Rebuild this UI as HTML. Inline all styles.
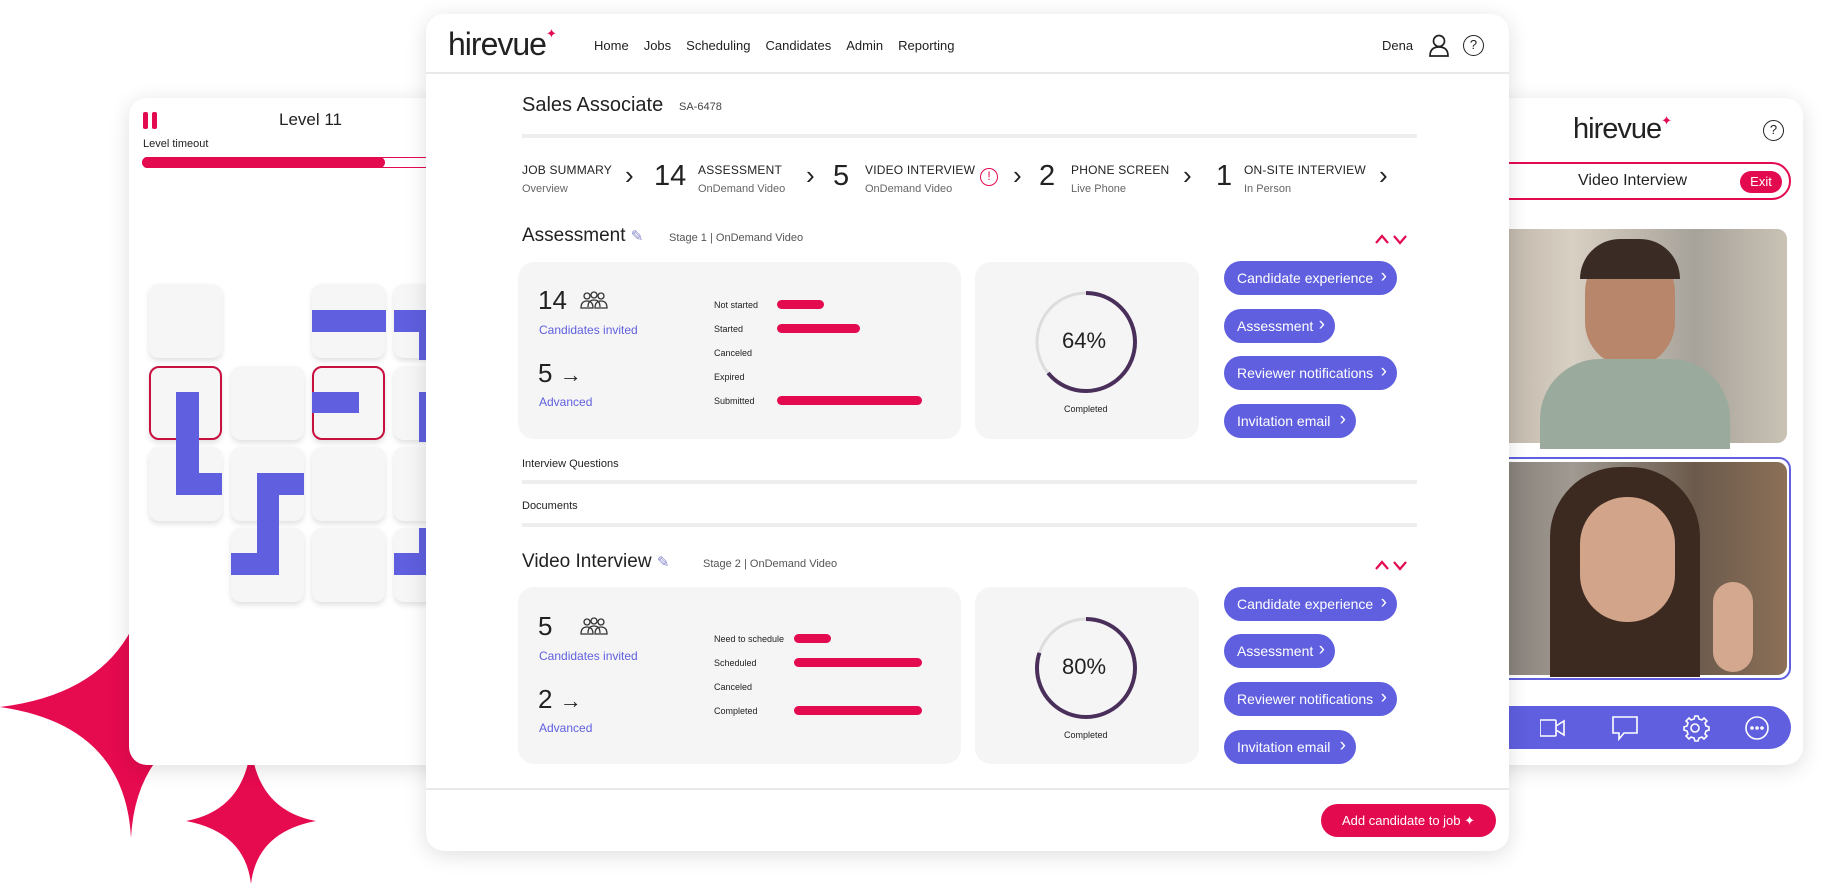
<!DOCTYPE html>
<html><head><meta charset="utf-8"><style>
*{box-sizing:border-box;margin:0;padding:0}
body{width:1824px;height:886px;background:#fff;font-family:"Liberation Sans",sans-serif;color:#222;position:relative;overflow:hidden}
.abs{position:absolute}
.panel{position:absolute;background:#fff;border-radius:18px;box-shadow:0 4px 22px rgba(0,0,0,.13)}
.tile{position:absolute;width:73px;height:74px;background:#f6f6f7;border-radius:10px;box-shadow:0 3px 6px rgba(0,0,0,.12)}
.sel{border:2px solid #c8103f}
.pb{position:absolute;background:#5f5fdf}
.nav span{margin-right:15px}
.btn{position:absolute;left:1224px;height:34px;background:#5f5fdf;color:#fff;border-radius:17px;font-size:14px;line-height:34px;padding-left:13px}
.btn:after{content:"›";position:absolute;right:10px;font-size:19px;top:-1px}
.card{position:absolute;background:#f5f5f6;border-radius:16px}
.lbl{position:absolute;font-size:9px;color:#222}
.bar{position:absolute;height:9px;background:#e40a50;border-radius:5px}
.big{position:absolute;font-size:26px;color:#222}
.pur{position:absolute;font-size:12px;color:#5f5fdf}
.st{position:absolute;top:163px;font-size:12px;letter-spacing:.2px}
.sub{position:absolute;top:183px;font-size:11px;color:#666}
.num{position:absolute;top:160px;font-size:29px}
.chev{position:absolute;top:160px;font-size:26px;color:#222}
.line{position:absolute;height:4px;background:#eee}
.logo{position:absolute;font-weight:normal;letter-spacing:-1px;color:#222}
</style></head><body>

<svg width="0" height="0" style="position:absolute"><defs>
<symbol id="ppl" viewBox="0 0 32 20"><g fill="none" stroke="#333" stroke-width="1.3"><circle cx="9" cy="5" r="3"/><circle cx="16" cy="4" r="3"/><circle cx="23" cy="5" r="3"/><path d="M3 17 Q3 10 9 10 Q15 10 15 17Z"/><path d="M10 16 Q10 9 16 9 Q22 9 22 16"/><path d="M17 17 Q17 10 23 10 Q29 10 29 17Z"/></g></symbol>
<symbol id="ud" viewBox="0 0 36 14"><g fill="none" stroke="#e40a50" stroke-width="2.2"><path d="M3 11 L9 4 L15 11"/><path d="M21 4 L27 11 L33 4"/></g></symbol>
</defs></svg>

<!-- stars -->
<svg class="abs" style="left:0;top:560px" width="330" height="326" viewBox="0 560 330 326">
<path d="M150 560 Q140 690 0 707 Q125 725 131 838 Q137 725 260 707 Q150 690 150 560Z" fill="#e60a4f"/>
<path d="M251 745 Q245 810 186 821 Q245 832 251 884 Q257 832 316 821 Q257 810 251 745Z" fill="#e60a4f"/>
</svg>

<!-- left panel -->
<div class="panel" style="left:129px;top:98px;width:320px;height:667px;overflow:hidden">
 <div class="abs" style="left:14px;top:14px;width:5px;height:17px;background:#e40a50;border-radius:2px"></div>
 <div class="abs" style="left:23px;top:14px;width:5px;height:17px;background:#e40a50;border-radius:2px"></div>
 <div class="abs" style="left:150px;top:12px;font-size:17px">Level 11</div>
 <div class="abs" style="left:14px;top:40px;font-size:11px">Level timeout</div>
 <div class="abs" style="left:13px;top:59px;width:300px;height:11px;border:1px solid #e40a50;border-radius:6px"></div>
 <div class="abs" style="left:13px;top:59px;width:243px;height:11px;background:#e40a50;border-radius:6px"></div>
</div>
<div class="abs" style="left:129px;top:98px;width:297px;height:667px;overflow:hidden">
 <div class="tile" style="left:20px;top:186px"></div>
 <div class="tile" style="left:183px;top:186px"></div>
 <div class="tile" style="left:265px;top:186px"></div>
 <div class="tile sel" style="left:20px;top:268px"></div>
 <div class="tile" style="left:102px;top:268px"></div>
 <div class="tile sel" style="left:183px;top:268px"></div>
 <div class="tile" style="left:265px;top:268px"></div>
 <div class="tile" style="left:20px;top:349px"></div>
 <div class="tile" style="left:102px;top:349px"></div>
 <div class="tile" style="left:183px;top:349px"></div>
 <div class="tile" style="left:265px;top:349px"></div>
 <div class="tile" style="left:102px;top:430px"></div>
 <div class="tile" style="left:183px;top:430px"></div>
 <div class="tile" style="left:265px;top:430px"></div>
 <div class="pb" style="left:183px;top:212px;width:74px;height:22px"></div>
 <div class="pb" style="left:265px;top:212px;width:40px;height:22px"></div>
 <div class="pb" style="left:290px;top:212px;width:20px;height:50px"></div>
 <div class="pb" style="left:47px;top:294px;width:23px;height:103px"></div>
 <div class="pb" style="left:47px;top:375px;width:46px;height:22px"></div>
 <div class="pb" style="left:183px;top:294px;width:47px;height:21px"></div>
 <div class="pb" style="left:290px;top:294px;width:20px;height:50px"></div>
 <div class="pb" style="left:128px;top:375px;width:47px;height:22px"></div>
 <div class="pb" style="left:128px;top:375px;width:22px;height:102px"></div>
 <div class="pb" style="left:102px;top:455px;width:48px;height:22px"></div>
 <div class="pb" style="left:290px;top:430px;width:20px;height:47px"></div>
 <div class="pb" style="left:265px;top:455px;width:40px;height:22px"></div>
</div>

<!-- right panel -->
<div class="panel" style="left:1480px;top:98px;width:323px;height:667px;overflow:hidden">
 <div class="logo" style="left:93px;top:15px;font-size:29px">hirevue<span style="color:#e40a50;font-size:13px;vertical-align:top">✦</span></div>
 <div class="abs" style="left:283px;top:22px;width:21px;height:21px;border:1.6px solid #222;border-radius:50%;font-size:13px;text-align:center;line-height:18px">?</div>
 <div class="abs" style="left:0;top:64px;width:311px;height:38px;border:2px solid #e40a50;border-radius:19px"></div>
 <div class="abs" style="left:98px;top:74px;font-size:16px">Video Interview</div>
 <div class="abs" style="left:260px;top:73px;width:42px;height:22px;background:#e40a50;color:#fff;border-radius:11px;font-size:13px;text-align:center;line-height:22px">Exit</div>
 <div class="abs" style="left:0;top:131px;width:307px;height:214px;border-radius:10px;background:linear-gradient(90deg,#b8aea3 0%,#d8d0c2 30%,#a7a29a 70%,#c9c2b5 100%)">
  <div class="abs" style="left:105px;top:18px;width:90px;height:120px;border-radius:45px;background:#b8876b"></div>
  <div class="abs" style="left:60px;top:130px;width:190px;height:90px;border-radius:60px 60px 0 0;background:#9aab9d"></div>
  <div class="abs" style="left:100px;top:10px;width:100px;height:40px;border-radius:50px 50px 0 0;background:#3a2c25"></div>
 </div>
 <div class="abs" style="left:-5px;top:359px;width:316px;height:223px;border:2px solid #5f5fdf;border-radius:12px"></div>
 <div class="abs" style="left:0;top:364px;width:307px;height:213px;border-radius:10px;background:linear-gradient(90deg,#7e7772 0%,#a09a92 30%,#6b5a4c 70%,#8c7057 100%)">
  <div class="abs" style="left:70px;top:5px;width:150px;height:210px;border-radius:70px 70px 0 0;background:#3c2a20"></div>
  <div class="abs" style="left:100px;top:35px;width:95px;height:125px;border-radius:47px;background:#d2a58b"></div>
  <div class="abs" style="left:233px;top:120px;width:40px;height:90px;border-radius:20px;background:#d4a88f"></div>
 </div>
 <div class="abs" style="left:0;top:608px;width:311px;height:43px;background:#5f5fdf;border-radius:0 22px 22px 0"></div>
 <svg class="abs" style="left:60px;top:615px" width="240" height="30" fill="none" stroke="#fff" stroke-width="1.6">
  <rect x="0" y="7" width="16" height="16" rx="1"/><path d="M16 13 L24 8 V22 L16 17"/>
  <path d="M73 4 H97 V20 H84 L79 26 V20 H73Z"/>
  <circle cx="155" cy="15" r="4"/><path d="M155 3 l3 0 1 3 3 1 2-2 3 3-2 2 1 3 3 1 0 3-3 1-1 3 2 2-3 3-2-2-3 1-1 3h-3l-1-3-3-1-2 2-3-3 2-2-1-3-3-1 0-3 3-1 1-3-2-2 3-3 2 2 3-1z"/>
  <circle cx="217" cy="15" r="11"/><circle cx="212" cy="15" r="1" fill="#fff"/><circle cx="217" cy="15" r="1" fill="#fff"/><circle cx="222" cy="15" r="1" fill="#fff"/>
 </svg>
</div>

<!-- main panel -->
<div class="panel" style="left:426px;top:14px;width:1083px;height:837px;overflow:hidden">
 <div class="logo" style="left:22px;top:12px;font-size:32px">hirevue<span style="color:#e40a50;font-size:13px;vertical-align:top">✦</span></div>
 <div class="abs nav" style="left:168px;top:24px;font-size:13px"><span>Home</span><span>Jobs</span><span>Scheduling</span><span>Candidates</span><span>Admin</span><span>Reporting</span></div>
 <div class="abs" style="left:956px;top:24px;font-size:13px">Dena</div>
 <svg class="abs" style="left:1002px;top:20px" width="22" height="24" fill="none" stroke="#222" stroke-width="1.7"><circle cx="11" cy="7" r="5.5"/><path d="M2 22 Q2 13 11 13 Q20 13 20 22Z"/></svg>
 <div class="abs" style="left:1037px;top:21px;width:21px;height:21px;border:1.6px solid #222;border-radius:50%;font-size:13px;text-align:center;line-height:18px">?</div>
 <div class="abs" style="left:0;top:58px;width:1083px;height:2px;background:#e8e8e8"></div>
</div>
<div class="abs" style="left:0;top:0;width:1824px;height:886px;pointer-events:none">
 <div class="abs" style="left:522px;top:94px;font-size:20px">Sales Associate</div>
 <div class="abs" style="left:679px;top:101px;font-size:11px;color:#444">SA-6478</div>
 <div class="line" style="left:522px;top:134px;width:895px"></div>

 <div class="st" style="left:522px">JOB SUMMARY</div><div class="sub" style="left:522px">Overview</div>
 <div class="chev" style="left:625px">›</div>
 <div class="num" style="left:654px">14</div>
 <div class="st" style="left:698px">ASSESSMENT</div><div class="sub" style="left:698px">OnDemand Video</div>
 <div class="chev" style="left:806px">›</div>
 <div class="num" style="left:833px">5</div>
 <div class="st" style="left:865px">VIDEO INTERVIEW</div><div class="sub" style="left:865px">OnDemand Video</div>
 <div class="abs" style="left:980px;top:168px;width:18px;height:18px;border:1.6px solid #e40a50;border-radius:50%;color:#e40a50;font-size:12px;text-align:center;line-height:15px">!</div>
 <div class="chev" style="left:1013px">›</div>
 <div class="num" style="left:1039px">2</div>
 <div class="st" style="left:1071px">PHONE SCREEN</div><div class="sub" style="left:1071px">Live Phone</div>
 <div class="chev" style="left:1183px">›</div>
 <div class="num" style="left:1216px">1</div>
 <div class="st" style="left:1244px">ON-SITE INTERVIEW</div><div class="sub" style="left:1244px">In Person</div>
 <div class="chev" style="left:1379px">›</div>

 <!-- Assessment section -->
 <div class="abs" style="left:522px;top:225px;font-size:19px">Assessment <span style="color:#8888cc;font-size:15px">✎</span></div>
 <div class="abs" style="left:669px;top:232px;font-size:11px;color:#555">Stage 1 | OnDemand Video</div>
 <svg class="abs" style="left:1373px;top:232px" width="36" height="14"><use href="#ud"/></svg>
 <div class="card" style="left:518px;top:262px;width:443px;height:177px"></div>
 <div class="card" style="left:975px;top:262px;width:224px;height:177px"></div>
 <div class="big" style="left:538px;top:285px">14</div>
 <svg class="abs" style="left:578px;top:291px" width="32" height="20"><use href="#ppl"/></svg>
 <div class="pur" style="left:539px;top:323px">Candidates invited</div>
 <div class="big" style="left:538px;top:358px">5 <span style="font-size:22px">→</span></div>
 <div class="pur" style="left:539px;top:395px">Advanced</div>
 <div class="lbl" style="left:714px;top:300px">Not started</div><div class="bar" style="left:777px;top:300px;width:47px"></div>
 <div class="lbl" style="left:714px;top:324px">Started</div><div class="bar" style="left:777px;top:324px;width:83px"></div>
 <div class="lbl" style="left:714px;top:348px">Canceled</div>
 <div class="lbl" style="left:714px;top:372px">Expired</div>
 <div class="lbl" style="left:714px;top:396px">Submitted</div><div class="bar" style="left:777px;top:396px;width:145px"></div>
 <svg class="abs" style="left:1034px;top:290px" width="104" height="104"><circle cx="52" cy="52" r="49" fill="none" stroke="#ddd" stroke-width="3"/><circle cx="52" cy="52" r="49" fill="none" stroke="#4a2f5a" stroke-width="4" stroke-dasharray="197 308" transform="rotate(-90 52 52)"/></svg>
 <div class="abs" style="left:1062px;top:328px;font-size:22px">64%</div>
 <div class="abs" style="left:1064px;top:404px;font-size:9px">Completed</div>
 <div class="btn" style="top:261px;width:173px">Candidate experience</div>
 <div class="btn" style="top:309px;width:111px">Assessment</div>
 <div class="btn" style="top:356px;width:173px">Reviewer notifications</div>
 <div class="btn" style="top:404px;width:132px">Invitation email</div>

 <div class="abs" style="left:522px;top:458px;font-size:11px">Interview Questions</div>
 <div class="line" style="left:522px;top:480px;width:895px"></div>
 <div class="abs" style="left:522px;top:500px;font-size:11px">Documents</div>
 <div class="line" style="left:522px;top:523px;width:895px"></div>

 <!-- Video Interview section -->
 <div class="abs" style="left:522px;top:551px;font-size:19px">Video Interview <span style="color:#8888cc;font-size:15px">✎</span></div>
 <div class="abs" style="left:703px;top:558px;font-size:11px;color:#555">Stage 2 | OnDemand Video</div>
 <svg class="abs" style="left:1373px;top:558px" width="36" height="14"><use href="#ud"/></svg>
 <div class="card" style="left:518px;top:587px;width:443px;height:177px"></div>
 <div class="card" style="left:975px;top:587px;width:224px;height:177px"></div>
 <div class="big" style="left:538px;top:611px">5</div>
 <svg class="abs" style="left:578px;top:617px" width="32" height="20"><use href="#ppl"/></svg>
 <div class="pur" style="left:539px;top:649px">Candidates invited</div>
 <div class="big" style="left:538px;top:684px">2 <span style="font-size:22px">→</span></div>
 <div class="pur" style="left:539px;top:721px">Advanced</div>
 <div class="lbl" style="left:714px;top:634px">Need to schedule</div><div class="bar" style="left:794px;top:634px;width:37px"></div>
 <div class="lbl" style="left:714px;top:658px">Scheduled</div><div class="bar" style="left:794px;top:658px;width:128px"></div>
 <div class="lbl" style="left:714px;top:682px">Canceled</div>
 <div class="lbl" style="left:714px;top:706px">Completed</div><div class="bar" style="left:794px;top:706px;width:128px"></div>
 <svg class="abs" style="left:1034px;top:616px" width="104" height="104"><circle cx="52" cy="52" r="49" fill="none" stroke="#ddd" stroke-width="3"/><circle cx="52" cy="52" r="49" fill="none" stroke="#4a2f5a" stroke-width="4" stroke-dasharray="246 308" transform="rotate(-90 52 52)"/></svg>
 <div class="abs" style="left:1062px;top:654px;font-size:22px">80%</div>
 <div class="abs" style="left:1064px;top:730px;font-size:9px">Completed</div>
 <div class="btn" style="top:587px;width:173px">Candidate experience</div>
 <div class="btn" style="top:634px;width:111px">Assessment</div>
 <div class="btn" style="top:682px;width:173px">Reviewer notifications</div>
 <div class="btn" style="top:730px;width:132px">Invitation email</div>

 <div class="abs" style="left:426px;top:788px;width:1083px;height:2px;background:#e8e8e8"></div>
 <div class="abs" style="left:1321px;top:804px;width:175px;height:33px;background:#e40a50;border-radius:17px;color:#fff;font-size:13px;line-height:33px;text-align:center">Add candidate to job ✦</div>
</div>
</body></html>
